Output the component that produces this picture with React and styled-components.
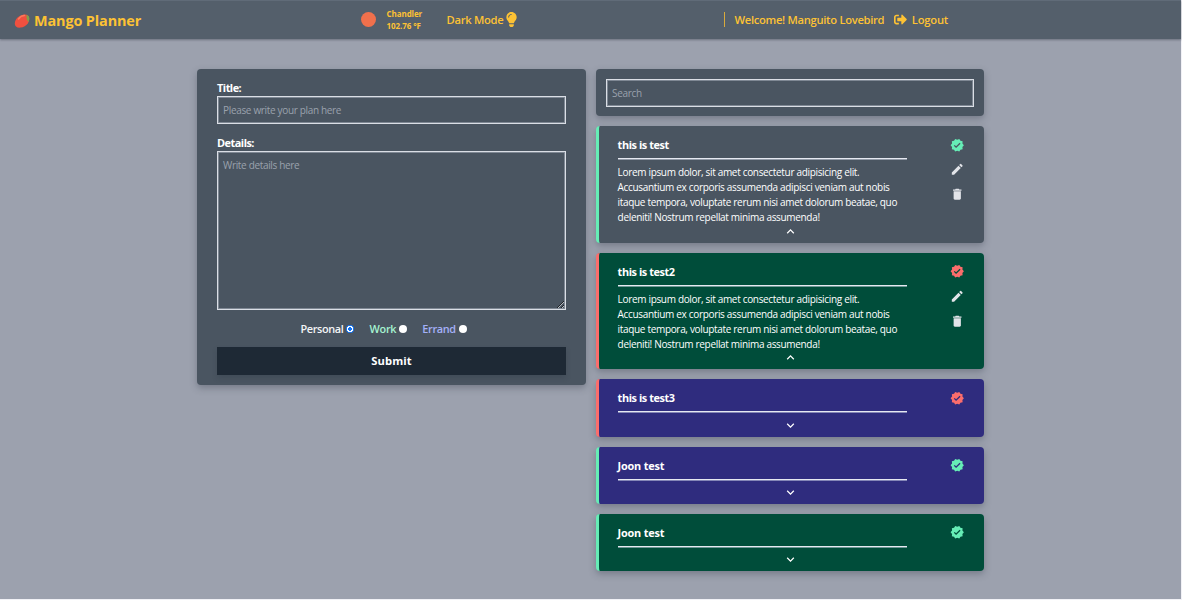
import React from "react";
import styled, { createGlobalStyle } from "styled-components";
import { MdVerified, MdEdit, MdDelete, MdExpandLess, MdExpandMore } from "react-icons/md";
import { FaLightbulb, FaSignOutAlt } from "react-icons/fa";

const GlobalStyle = createGlobalStyle`
  *, *::before, *::after { box-sizing: border-box; }
  html { background: #f1f1f6; }
  body {
    margin: 0;
    overflow: hidden;
    font-family: "Open Sans", "Noto Sans", sans-serif;
    color: #fff;
  }
  svg { display: block; flex: none; }
`;

const Page = styled.div`
  width: 1181px;
  height: 599px;
  background: #9ca1ae;
`;

const Header = styled.header`
  display: flex;
  align-items: center;
  height: 39px;
  padding: 0 0 1px 14px;
  color: #fdc234;
  background: #545f6b;
  border-top: 1px solid #606b78;
  box-shadow: 0 1px 2px rgba(50, 55, 70, 0.45);
  font-weight: 600;
  font-size: 11.2px;
  white-space: nowrap;
`;

const Brand = styled.h1`
  display: flex;
  align-items: center;
  gap: 4px;
  width: 347px;
  margin: 0;
  padding-top: 2px;
  font-size: 14.4px;
  line-height: 20px;
  font-weight: 700;
  letter-spacing: -0.11px;
`;

const Weather = styled.div`
  display: flex;
  align-items: center;
  gap: 10.5px;
  width: 85.5px;
`;

const Sun = styled.span`
  width: 15px;
  height: 15px;
  border-radius: 50%;
  background: #f0704c;
`;

const Reading = styled.div`
  font-size: 8px;
  line-height: 12px;
  font-weight: 700;
  letter-spacing: -0.08px;
`;

const ModeToggle = styled.div`
  display: flex;
  align-items: center;
  gap: 1px;
  width: 277.5px;
  letter-spacing: -0.28px;
`;

const Account = styled.div`
  display: flex;
  align-items: center;
  padding-left: 10.5px;
  letter-spacing: -0.29px;
  background: linear-gradient(#d9aa3c, #d9aa3c) left center / 1px 15px no-repeat;
`;

const Logout = styled.a`
  display: flex;
  align-items: center;
  gap: 5px;
  margin-left: 9.5px;
  letter-spacing: -0.2px;
`;

const Main = styled.main`
  display: flex;
  align-items: flex-start;
  gap: 10px;
  padding: 30px 0 0 197px;
`;

const Panel = styled.section`
  background: #4a5561;
  border-radius: 4px;
  box-shadow: 0 3px 7px rgba(50, 55, 70, 0.35);
`;

const FormPanel = styled(Panel)`
  display: flex;
  flex-direction: column;
  width: 389px;
  height: 315.5px;
  padding: 11px 20px 0;
`;

const Label = styled.label`
  height: 16px;
  font-size: 10.9px;
  line-height: 16px;
  font-weight: 700;
  letter-spacing: -0.5px;
`;

const fieldStyle = `
  display: block;
  width: 100%;
  margin: 0;
  padding: 0 5px;
  color: #fff;
  background: transparent;
  border: 1px solid #dadee5;
  box-shadow: inset 0 0 0 1px rgba(200, 208, 220, 0.42);
  border-radius: 0;
  font-family: inherit;
  font-size: 10px;
  letter-spacing: -0.33px;
  &::placeholder { color: #9aa2ad; opacity: 1; }
`;

const TextInput = styled.input`
  ${fieldStyle}
  height: 28px;
`;

const TextArea = styled.textarea`
  ${fieldStyle}
  height: 159px;
  padding-top: 6px;
  line-height: 15px;
  resize: vertical;
`;

const TitleInput = styled(TextInput)`
  margin-bottom: 11px;
`;

const Choices = styled.div`
  display: flex;
  gap: 15px;
  height: 37px;
  padding: 0 0 0 83.5px;
  align-items: center;
`;

const Choice = styled.label`
  display: flex;
  align-items: center;
  gap: 3px;
  color: ${(p) => p.$color};
  font-size: 10.9px;
  font-weight: 600;
  letter-spacing: ${(p) => p.$spacing};
`;

const Radio = styled.input`
  appearance: none;
  width: 8px;
  height: 8px;
  margin: 0;
  border-radius: 50%;
  background: #fff;
  &:checked {
    background: radial-gradient(circle, #1475f5 1.7px, #fff 2.1px, #fff 2.9px, #1475f5 3.3px);
  }
`;

const Submit = styled.button`
  height: 27.5px;
  padding: 0;
  color: #fff;
  background: #1e2935;
  border: 0;
  box-shadow: 0 3px 5px rgba(35, 45, 60, 0.22);
  font: 700 11.2px/27px "Open Sans", sans-serif;
  letter-spacing: 0.07px;
`;

const Column = styled.div`
  display: flex;
  flex-direction: column;
  gap: 9.9px;
  width: 388px;
`;

const SearchPanel = styled(Panel)`
  height: 47.1px;
  padding: 9.5px 10px;
`;

const Card = styled.article`
  display: grid;
  grid-template-columns: 289px 1fr;
  position: relative;
  height: ${(p) => (p.$open ? "116.8px" : "57.25px")};
  padding: 11px 20px 0 18.6px;
  background: ${(p) => p.$color};
  border-left: 3px solid ${(p) => (p.$done ? "#66edb6" : "#fb6d6c")};
  border-radius: 4px;
  box-shadow: 0 3px 7px rgba(50, 55, 70, 0.35);
`;

const CardTitle = styled.h2`
  height: 22px;
  margin: 0 0 1px;
  border-bottom: 1px solid #e6e9f1;
  box-shadow: 0 1px 0 rgba(220, 226, 240, 0.5);
  font-size: 10.9px;
  line-height: 16px;
  font-weight: 700;
  letter-spacing: ${(p) => p.$spacing};
`;

const CardText = styled.p`
  margin: 6.3px 0 0;
  font-size: 10px;
  line-height: 14.95px;
  letter-spacing: -0.325px;
`;

const Actions = styled.div`
  display: flex;
  flex-direction: column;
  align-items: flex-end;
  gap: 10.4px;
  padding-top: 0.6px;
  color: #e2e4e9;
`;

const Status = styled(MdVerified)`
  color: ${(p) => p.color};
`;

const Chevron = styled.div`
  position: absolute;
  left: -2px;
  right: 0;
  bottom: 4px;
  display: flex;
  justify-content: center;
`;

function Mango() {
  return (
    <svg width="16" height="14" viewBox="0 0 16 14">
      <path d="M.8 9.500C.9 5 5.200 1.200 10 .5c3.200-.4 5.300 1.400 5.300 4.300 0 4-3.500 8.200-8.500 8.800C2.800 14 .8 12.400.8 9.500Z" fill="#f0503f" />
      <path d="M4.500 5c1.500-2 3.800-3.300 6-3.400" stroke="#fb7a5c" strokeWidth="1.500" fill="none" strokeLinecap="round" />
      <path d="M12.600 1c2 .4 2.900 1.900 2.700 4.100-.1 1.100-.4 2-.9 2.900-1.600-2-2.200-4.500-1.800-7Z" fill="#7fa14a" />
    </svg>
  );
}

const LOREM =
  "Lorem ipsum dolor, sit amet consectetur adipisicing elit. Accusantium ex corporis assumenda adipisci veniam aut nobis itaque tempora, voluptate rerum nisi amet dolorum beatae, quo deleniti! Nostrum repellat minima assumenda!";

const colors = { personal: "#4a5561", work: "#004d3a", errand: "#2f2c7e" };

const plans = [
  { title: "this is test", kind: "personal", done: true, text: LOREM },
  { title: "this is test2", kind: "work", done: false, text: LOREM },
  { title: "this is test3", kind: "errand", done: false },
  { title: "Joon test", kind: "errand", done: true },
  { title: "Joon test", kind: "work", done: true },
];

function PlanCard({ title, kind, done, text }) {
  const open = Boolean(text);
  return (
    <Card $open={open} $done={done} $color={colors[kind]}>
      <div>
        <CardTitle $spacing={title.startsWith("this") ? "-0.42px" : "-0.2px"}>{title}</CardTitle>
        {open && <CardText>{text}</CardText>}
      </div>
      <Actions>
        <Status size={14.5} color={done ? "#66edb6" : "#fb6d6c"} />
        {open && <MdEdit size={14.5} />}
        {open && <MdDelete size={14.5} />}
      </Actions>
      <Chevron>{open ? <MdExpandLess size={15} /> : <MdExpandMore size={15} />}</Chevron>
    </Card>
  );
}

export default function App() {
  return (
    <Page>
      <GlobalStyle />
      <Header>
        <Brand>
          <Mango />
          Mango Planner
        </Brand>
        <Weather>
          <Sun />
          <div>
            <Reading>Chandler</Reading>
            <Reading>102.76 °F</Reading>
          </div>
        </Weather>
        <ModeToggle>
          Dark Mode
          <FaLightbulb size={15} />
        </ModeToggle>
        <Account>
          Welcome! Manguito Lovebird
          <Logout>
            <FaSignOutAlt size={13} />
            Logout
          </Logout>
        </Account>
      </Header>
      <Main>
        <FormPanel as="form">
          <Label htmlFor="title">Title:</Label>
          <TitleInput id="title" placeholder="Please write your plan here" />
          <Label htmlFor="details">Details:</Label>
          <TextArea id="details" placeholder="Write details here" />
          <Choices>
            <Choice $color="#f3f4f6" $spacing="-0.37px">
              Personal
              <Radio type="radio" name="kind" defaultChecked />
            </Choice>
            <Choice $color="#a5f3d0" $spacing="-0.25px">
              Work
              <Radio type="radio" name="kind" />
            </Choice>
            <Choice $color="#a5b0f8" $spacing="-0.35px">
              Errand
              <Radio type="radio" name="kind" />
            </Choice>
          </Choices>
          <Submit type="button">Submit</Submit>
        </FormPanel>
        <Column>
          <SearchPanel>
            <TextInput placeholder="Search" aria-label="Search" />
          </SearchPanel>
          {plans.map((plan, i) => (
            <PlanCard key={i} {...plan} />
          ))}
        </Column>
      </Main>
    </Page>
  );
}
